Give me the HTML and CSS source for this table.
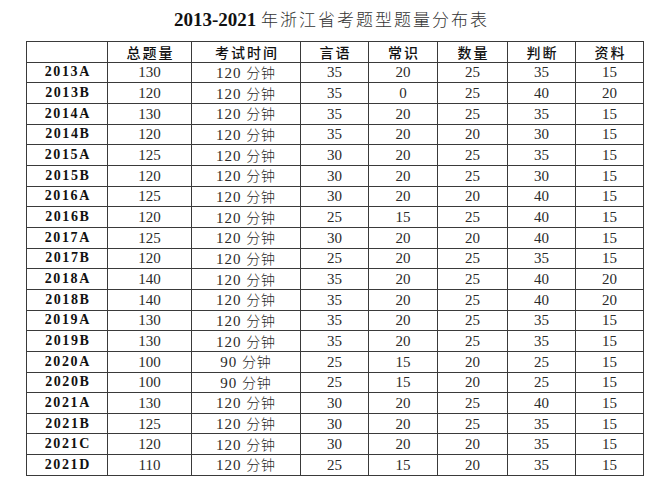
FILE: index.html
```html
<!DOCTYPE html>
<html lang="zh">
<head>
<meta charset="utf-8">
<title>2013-2021 年浙江省考题型题量分布表</title>
<link rel="stylesheet" href="styles.css">
</head>
<body>
<h1 class="title"><span class="title-num">2013-2021</span> <span class="title-cn">年浙江省考题型题量分布表</span></h1>
<table class="grid">
  <colgroup>
    <col class="c-year"><col class="c-total"><col class="c-time"><col class="c-n"><col class="c-n2"><col class="c-n3"><col class="c-n"><col class="c-n">
  </colgroup>
  <thead>
    <tr><th></th><th>总题量</th><th>考试时间</th><th>言语</th><th>常识</th><th>数量</th><th>判断</th><th>资料</th></tr>
  </thead>
  <tbody>
    <tr><td class="yr">2013A</td><td>130</td><td class="tm">120 <span class="cn">分钟</span></td><td>35</td><td>20</td><td>25</td><td>35</td><td>15</td></tr>
    <tr><td class="yr">2013B</td><td>120</td><td class="tm">120 <span class="cn">分钟</span></td><td>35</td><td>0</td><td>25</td><td>40</td><td>20</td></tr>
    <tr><td class="yr">2014A</td><td>130</td><td class="tm">120 <span class="cn">分钟</span></td><td>35</td><td>20</td><td>25</td><td>35</td><td>15</td></tr>
    <tr><td class="yr">2014B</td><td>120</td><td class="tm">120 <span class="cn">分钟</span></td><td>35</td><td>20</td><td>20</td><td>30</td><td>15</td></tr>
    <tr><td class="yr">2015A</td><td>125</td><td class="tm">120 <span class="cn">分钟</span></td><td>30</td><td>20</td><td>25</td><td>35</td><td>15</td></tr>
    <tr><td class="yr">2015B</td><td>120</td><td class="tm">120 <span class="cn">分钟</span></td><td>30</td><td>20</td><td>25</td><td>30</td><td>15</td></tr>
    <tr><td class="yr">2016A</td><td>125</td><td class="tm">120 <span class="cn">分钟</span></td><td>30</td><td>20</td><td>20</td><td>40</td><td>15</td></tr>
    <tr><td class="yr">2016B</td><td>120</td><td class="tm">120 <span class="cn">分钟</span></td><td>25</td><td>15</td><td>25</td><td>40</td><td>15</td></tr>
    <tr><td class="yr">2017A</td><td>125</td><td class="tm">120 <span class="cn">分钟</span></td><td>30</td><td>20</td><td>20</td><td>40</td><td>15</td></tr>
    <tr><td class="yr">2017B</td><td>120</td><td class="tm">120 <span class="cn">分钟</span></td><td>25</td><td>20</td><td>25</td><td>35</td><td>15</td></tr>
    <tr><td class="yr">2018A</td><td>140</td><td class="tm">120 <span class="cn">分钟</span></td><td>35</td><td>20</td><td>25</td><td>40</td><td>20</td></tr>
    <tr><td class="yr">2018B</td><td>140</td><td class="tm">120 <span class="cn">分钟</span></td><td>35</td><td>20</td><td>25</td><td>40</td><td>20</td></tr>
    <tr><td class="yr">2019A</td><td>130</td><td class="tm">120 <span class="cn">分钟</span></td><td>35</td><td>20</td><td>25</td><td>35</td><td>15</td></tr>
    <tr><td class="yr">2019B</td><td>130</td><td class="tm">120 <span class="cn">分钟</span></td><td>35</td><td>20</td><td>25</td><td>35</td><td>15</td></tr>
    <tr><td class="yr">2020A</td><td>100</td><td class="tm">90 <span class="cn">分钟</span></td><td>25</td><td>15</td><td>20</td><td>25</td><td>15</td></tr>
    <tr><td class="yr">2020B</td><td>100</td><td class="tm">90 <span class="cn">分钟</span></td><td>25</td><td>15</td><td>20</td><td>25</td><td>15</td></tr>
    <tr><td class="yr">2021A</td><td>130</td><td class="tm">120 <span class="cn">分钟</span></td><td>30</td><td>20</td><td>25</td><td>40</td><td>15</td></tr>
    <tr><td class="yr">2021B</td><td>125</td><td class="tm">120 <span class="cn">分钟</span></td><td>30</td><td>20</td><td>25</td><td>35</td><td>15</td></tr>
    <tr><td class="yr">2021C</td><td>120</td><td class="tm">120 <span class="cn">分钟</span></td><td>30</td><td>20</td><td>20</td><td>35</td><td>15</td></tr>
    <tr><td class="yr">2021D</td><td>110</td><td class="tm">120 <span class="cn">分钟</span></td><td>25</td><td>15</td><td>20</td><td>35</td><td>15</td></tr>
  </tbody>
</table>
</body>
</html>
```

FILE: styles.css
```css
html, body {
  margin: 0;
  padding: 0;
  background: #ffffff;
}

body {
  font-family: "Liberation Serif", "Noto Sans CJK SC", serif;
  color: #222222;
}

.title {
  margin: 0;
  height: 41px;
  box-sizing: border-box;
  padding-top: 9px;
  text-align: center;
  font-size: 19px;
  line-height: 20px;
  font-weight: normal;
  color: #111111;
}

.title-num {
  font-family: "Liberation Serif", serif;
  font-weight: bold;
}

.title-cn {
  font-family: "Noto Sans CJK SC", sans-serif;
  font-weight: 300;
  font-size: 17px;
  letter-spacing: 2px;
  color: #333333;
}

.grid {
  margin-left: 26px;
  border-collapse: collapse;
  table-layout: fixed;
  width: 618px;
}

.c-year { width: 81px; }
.c-total { width: 84px; }
.c-time { width: 109px; }
.c-n { width: 68px; }
.c-n2 { width: 69px; }
.c-n3 { width: 70px; }

.grid th,
.grid td {
  border: 1px solid #3a3a3a;
  padding: 0;
  height: 19.67px;
  text-align: center;
  vertical-align: middle;
  font-size: 15px;
  line-height: 16px;
  white-space: nowrap;
}

.grid th {
  font-family: "Noto Sans CJK SC", sans-serif;
  font-weight: 500;
  font-size: 14px;
  letter-spacing: 2px;
  text-indent: 2px;
  color: #111111;
}

.grid td {
  font-family: "Liberation Serif", serif;
  color: #2a2a2a;
}

.grid td.yr {
  font-weight: bold;
  font-size: 14px;
  letter-spacing: 1.6px;
  text-indent: 1.6px;
  color: #111111;
}

.grid td.tm {
  letter-spacing: 1px;
}

.cn {
  font-family: "Noto Sans CJK SC", sans-serif;
  font-weight: 300;
  font-size: 14px;
}
```
